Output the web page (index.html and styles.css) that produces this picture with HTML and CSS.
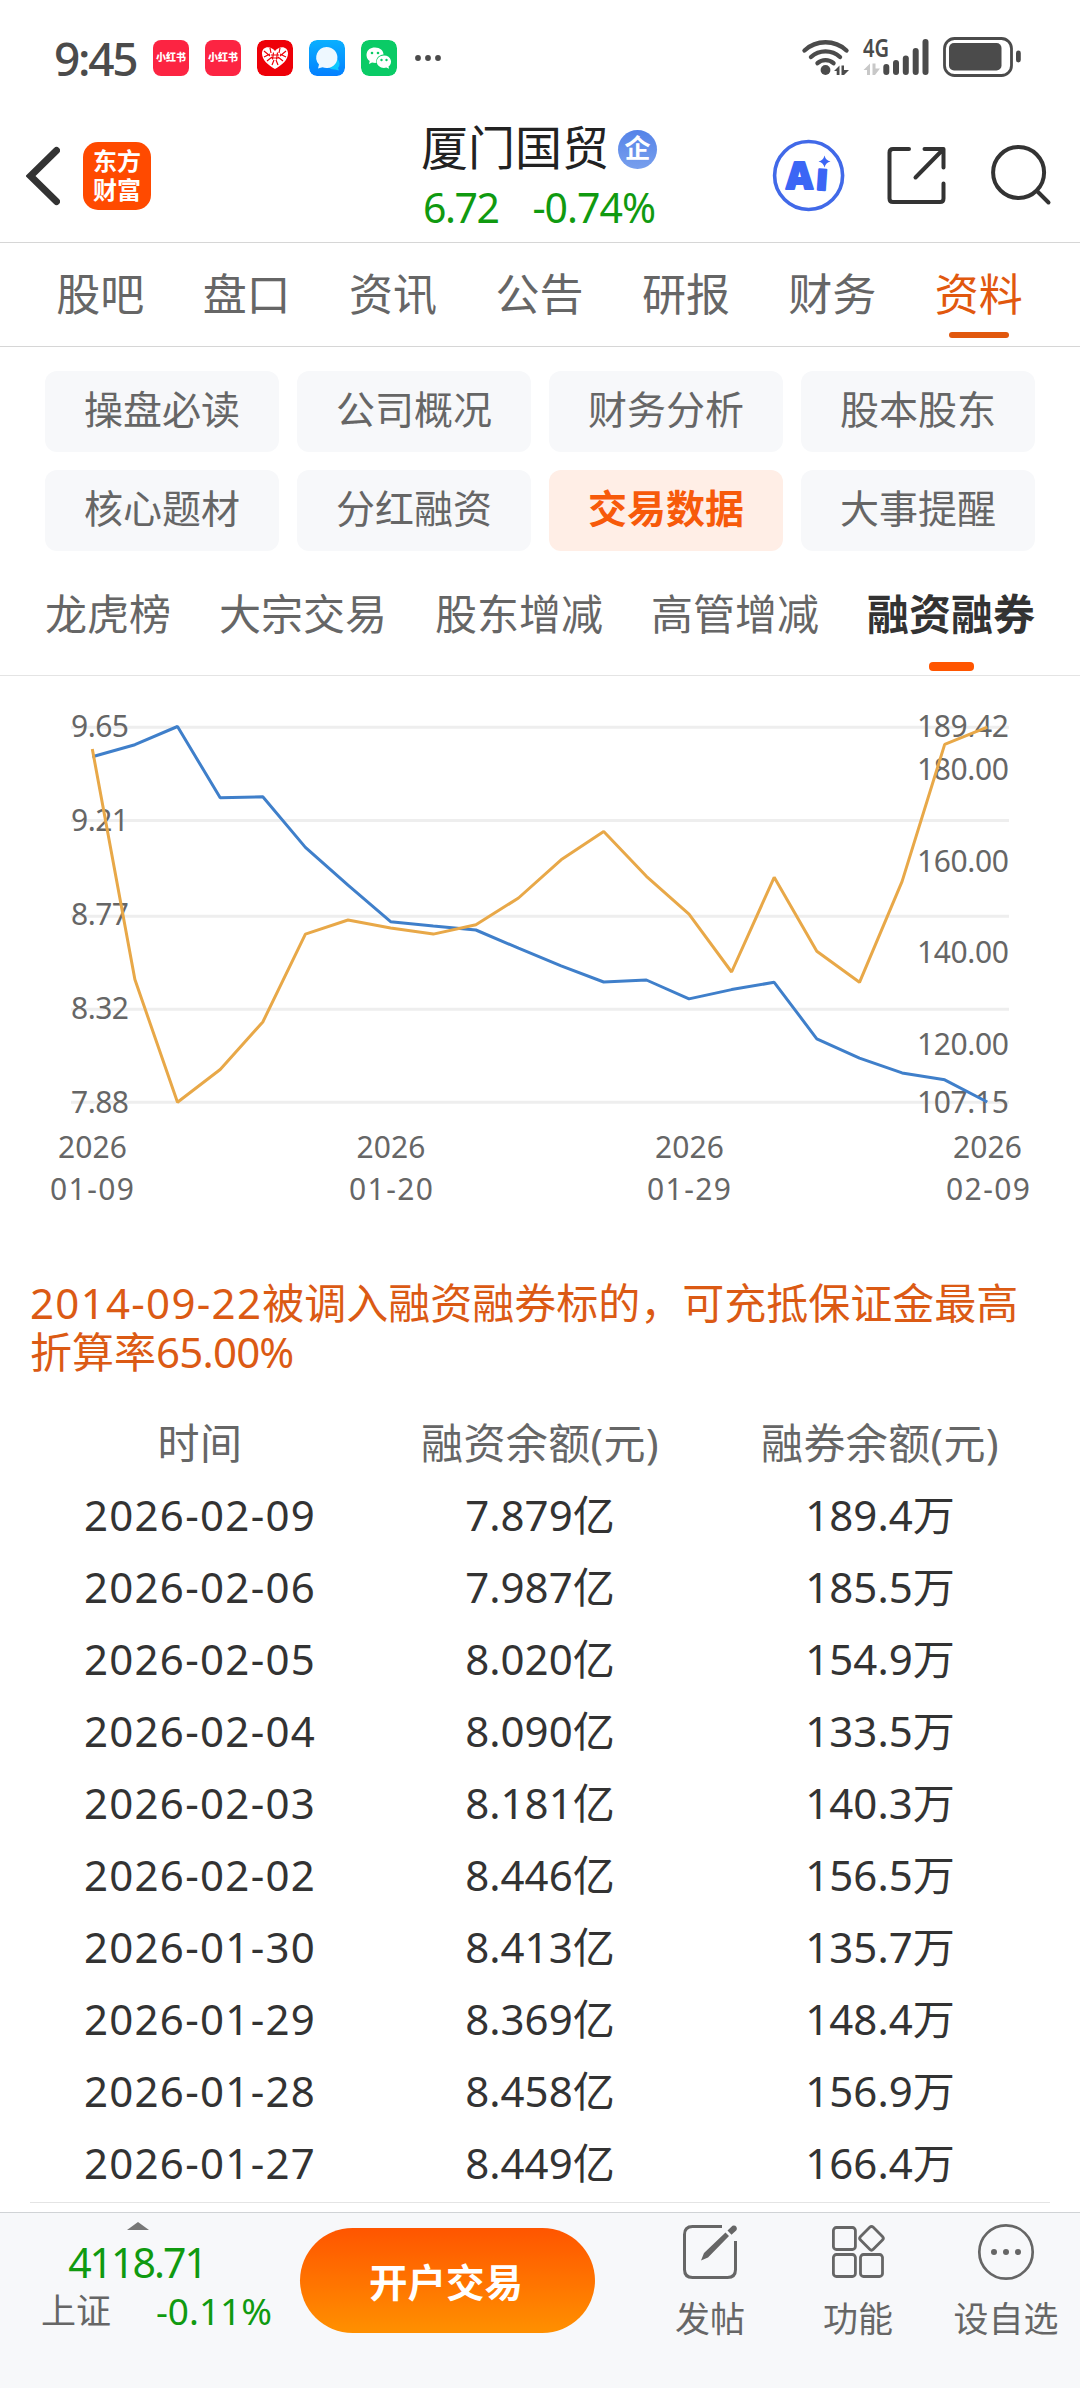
FILE: index.html
```html
<!DOCTYPE html>
<html lang="zh-CN">
<head>
    <meta charset="UTF-8">
    <meta name="viewport" content="width=device-width, initial-scale=1.0">
    <title>厦门国贸 - 融资融券</title>
    <link rel="stylesheet" href="styles.css">
</head>
<body>
    <div class="status-bar">
        <span class="clock">9:45</span>
        <div class="app-icons">
            <span class="app red">小红书</span>
            <span class="app red">小红书</span>
            <svg class="app" viewBox="0 0 36 36">
                <rect width="36" height="36" rx="8" fill="#ee0008"/>
                <path d="M18 29C11 25 5 20 5 13.500C5 6.500 13 5 18 11C23 5 31 6.500 31 13.500C31 20 25 25 18 29Z" fill="#fff"/>
                <path d="M7 11l6 5M7 17l6-3M10 21l5-4M13 8l1 5M29 11l-6 5M29 17l-6-3M26 21l-5-4M23 8l-1 5M15 25l2-5M21 25l-2-5M16.500 12.500l-1 7M20.500 12.500l-1 7M14 15h8M14 18h8" stroke="#ee0008" stroke-width="1.200"/>
            </svg>
            <svg class="app" viewBox="0 0 36 36">
                <defs>
                    <linearGradient id="msgBg" x1="0" y1="0" x2="0" y2="1">
                        <stop offset="0" stop-color="#0ab0ff"/>
                        <stop offset="1" stop-color="#0480ff"/>
                    </linearGradient>
                </defs>
                <rect width="36" height="36" rx="8" fill="url(#msgBg)"/>
                <path d="M28 19a6 6 0 0 1 1 9l1 2.500l-4-1a8 8 0 0 1-7-3z" fill="#0cc8ff"/>
                <path d="M17.500 7a11 10.500 0 1 1-4 20.300L9 28.500l1-4A11 10.500 0 0 1 17.500 7z" fill="#eef8ff"/>
            </svg>
            <svg class="app" viewBox="0 0 36 36">
                <rect width="36" height="36" rx="8" fill="#0acb66"/>
                <path d="M14 7.500c5 0 8.500 3 8.500 7c-5 .500-8 4-7 8.300c-1.500.200-3 0-4.500-.300L8 24l.700-3C3.500 17.500 4.500 7.500 14 7.500z" fill="#fff"/>
                <path d="M23 15.500c7.500 0 9 8 4.500 11l.500 2.300l-2.700-1.200c-5 1.200-9.500-1.600-9.500-5.800c0-3.500 3-6.300 7.200-6.300z" fill="#fff"/>
                <g fill="#0acb66">
                    <circle cx="11" cy="13" r="1.300"/><circle cx="17" cy="13" r="1.300"/>
                    <circle cx="20.500" cy="20" r="1.200"/><circle cx="25.500" cy="20" r="1.200"/>
                </g>
            </svg>
        </div>
        <svg class="dots" width="28" height="8" viewBox="0 0 28 8" fill="#4b4b4b">
            <circle cx="4" cy="4" r="2.900"/><circle cx="14" cy="4" r="2.900"/><circle cx="24" cy="4" r="2.900"/>
        </svg>
        <svg class="system-icons" width="224" height="64" viewBox="800 26 224 64" fill="#4b4b4b">
            <g fill="none" stroke="#4b4b4b" stroke-width="4.400" stroke-linecap="round">
                <path d="M804.500 50.500a31 31 0 0 1 42 0"/>
                <path d="M811 57a21.500 21.500 0 0 1 29 0"/>
                <path d="M817.500 63.200a12 12 0 0 1 16 0"/>
            </g>
            <circle cx="825.500" cy="70" r="4.900"/>
            <path d="M834 71l5.500-5.500v9.500h-2.800v-4zM841.500 65.500h2.500v4.500h5l-5 5h-2.500z"/>
            <text class="net" x="863" y="57" textLength="26" lengthAdjust="spacingAndGlyphs">4G</text>
            <path fill="#c8c8c8" d="M863.500 70l6.500-6.500v11.500h-3v-5zM872.500 63.500h3v5h4.500l-5 6.500h-2.500z"/>
            <rect x="883.300" y="64" width="6" height="11" rx="3"/>
            <rect x="893" y="60" width="6" height="15" rx="3"/>
            <rect x="902.800" y="55.500" width="6" height="19.500" rx="3"/>
            <rect x="912.700" y="48" width="6" height="27" rx="3"/>
            <rect x="922.500" y="39" width="6" height="36" rx="3"/>
            <rect x="944.500" y="38.500" width="67" height="37" rx="10" fill="none" stroke="#4b4b4b" stroke-width="2.800"/>
            <rect x="949" y="43" width="52.500" height="27.500" rx="5"/>
            <rect x="1016" y="50.500" width="4.800" height="12" rx="2.400"/>
        </svg>
    </div>

    <header class="header">
        <div class="header-left">
            <svg width="34" height="60" viewBox="0 0 34 60">
                <path d="M30.500 4.500L4.500 30L30.500 55.500" fill="none" stroke="#333" stroke-width="7" stroke-linecap="round"/>
            </svg>
            <div class="logo">东方<br>财富</div>
        </div>
        <div class="stock">
            <div class="stock-name">厦门国贸<span class="badge">企</span></div>
            <div class="stock-price"><span class="price">6.72</span><span class="change">-0.74%</span></div>
        </div>
        <svg class="header-icons" width="282" height="76" viewBox="770 138 282 76" fill="none" stroke="#333" stroke-width="4" stroke-linecap="round" stroke-linejoin="round">
            <circle cx="808.600" cy="175.500" r="34" stroke="#4169e8" stroke-width="3.600"/>
            <text class="ai" x="786" y="188.500">A</text>
            <text class="ai" x="816" y="190" transform="rotate(4 822 180)">ı</text>
            <path d="M824.500 155.500q1.200 5 6 6q-4.800 1-6 6q-1.200-5-6-6q4.800-1 6-6z" fill="#3b66f5" stroke="none"/>
            <path d="M909 149H893q-3.500 0-3.500 3.500V198.500q0 3.500 3.500 3.500H940q3.500 0 3.500-3.500V183.500M924.500 149H943.500V167.500M943 149.500L915.500 177.500"/>
            <circle cx="1018.600" cy="172.500" r="25.500"/>
            <path d="M1037 191L1048.500 202.500"/>
        </svg>
    </header>

    <nav class="main-tabs">
        <span>股吧</span>
        <span>盘口</span>
        <span>资讯</span>
        <span>公告</span>
        <span>研报</span>
        <span>财务</span>
        <span class="active">资料</span>
    </nav>

    <div class="chips">
        <span>操盘必读</span>
        <span>公司概况</span>
        <span>财务分析</span>
        <span>股本股东</span>
        <span>核心题材</span>
        <span>分红融资</span>
        <span class="active">交易数据</span>
        <span>大事提醒</span>
    </div>

    <nav class="sub-tabs">
        <span>龙虎榜</span>
        <span>大宗交易</span>
        <span>股东增减</span>
        <span>高管增减</span>
        <span class="active">融资融券</span>
    </nav>

    <svg class="chart" width="1080" height="602" viewBox="0 676 1080 602">
        <path class="grid" d="M71 727.300H1009M71 820.500H1009M71 916.300H1009M71 1009.300H1009M71 1102.300H1009"/>
        <g class="axis">
            <text x="71" y="737" textLength="58">9.65</text>
            <text x="71" y="831" textLength="58">9.21</text>
            <text x="71" y="925" textLength="58">8.77</text>
            <text x="71" y="1019" textLength="58">8.32</text>
            <text x="71" y="1113" textLength="58">7.88</text>
        </g>
        <g class="axis">
            <text x="917" y="737" textLength="92">189.42</text>
            <text x="917" y="780" textLength="92">180.00</text>
            <text x="917" y="872" textLength="92">160.00</text>
            <text x="917" y="963" textLength="92">140.00</text>
            <text x="917" y="1055" textLength="92">120.00</text>
            <text x="917" y="1113" textLength="92">107.15</text>
        </g>
        <g class="axis">
            <text x="58" y="1158" textLength="69">2026</text>
            <text x="50" y="1200" textLength="84">01-09</text>
            <text x="356.500" y="1158" textLength="69">2026</text>
            <text x="349" y="1200" textLength="84">01-20</text>
            <text x="655" y="1158" textLength="69">2026</text>
            <text x="647" y="1200" textLength="84">01-29</text>
            <text x="953" y="1158" textLength="69">2026</text>
            <text x="946" y="1200" textLength="84">02-09</text>
        </g>
        <polyline class="line margin" points="92.300,756.800 134.900,744.700 177.500,726.500 220.200,797.800 262.800,796.700 305.400,847.400 348,885.200 390.600,921.700 433.300,925.900 475.900,930 518.500,948.200 561.100,965.800 603.700,982 646.400,980 689,998.900 731.600,989.600 774.200,982.300 816.800,1038.800 859.500,1058.100 902.100,1072.900 944.700,1079.800 987.300,1102"/>
        <polyline class="line short" points="92.300,748.900 134.900,979.600 177.500,1102.200 220.200,1069.500 262.800,1022 305.400,934.100 348,920 390.600,928 433.300,934.100 475.900,924.800 518.500,898 561.100,859.800 603.700,831.500 646.400,876.300 689,914.200 731.600,972 774.200,877.300 816.800,951.300 859.500,982.300 902.100,881.400 944.700,744.400 987.300,727.200"/>
    </svg>

    <p class="note"><span class="date">2014-09-22</span>被调入融资融券标的，可充抵保证金最高折算率<span class="rate">65.00%</span></p>

    <div class="data-wrap">
        <table class="data">
            <thead>
                <tr><th>时间</th><th>融资余额(元)</th><th>融券余额(元)</th></tr>
            </thead>
            <tbody>
                <tr><td>2026-02-09</td><td>7.879亿</td><td>189.4万</td></tr>
                <tr><td>2026-02-06</td><td>7.987亿</td><td>185.5万</td></tr>
                <tr><td>2026-02-05</td><td>8.020亿</td><td>154.9万</td></tr>
                <tr><td>2026-02-04</td><td>8.090亿</td><td>133.5万</td></tr>
                <tr><td>2026-02-03</td><td>8.181亿</td><td>140.3万</td></tr>
                <tr><td>2026-02-02</td><td>8.446亿</td><td>156.5万</td></tr>
                <tr><td>2026-01-30</td><td>8.413亿</td><td>135.7万</td></tr>
                <tr><td>2026-01-29</td><td>8.369亿</td><td>148.4万</td></tr>
                <tr><td>2026-01-28</td><td>8.458亿</td><td>156.9万</td></tr>
                <tr><td>2026-01-27</td><td>8.449亿</td><td>166.4万</td></tr>
            </tbody>
        </table>
    </div>

    <footer class="bottom-bar">
        <div class="index">
            <div class="arrow-up"></div>
            <div class="index-value">4118.71</div>
            <div class="index-row"><span>上证</span><span class="index-change">-0.11%</span></div>
        </div>
        <button class="trade" type="button">开户交易</button>
        <div class="actions">
            <div class="action">
                <svg width="60" height="60" viewBox="0 0 60 60" fill="none" stroke="#666" stroke-width="3">
                    <path d="M42 4.500H12.500Q4.500 4.500 4.500 12.500V47.500Q4.500 55.500 12.500 55.500H47.500Q55.500 55.500 55.500 47.500V21L55.500 19"/>
                    <path d="M21 38.500L24 31L45.500 10.500L49 14L28 35.500ZM47.500 8.500L52.500 3.800Q55 3 56.500 5Q57.500 7 56.200 8.500L51.500 12.800Z" fill="#666" stroke="none"/>
                </svg>
                <span>发帖</span>
            </div>
            <div class="action">
                <svg width="60" height="60" viewBox="0 0 60 60" fill="none" stroke="#666" stroke-width="2.800">
                    <rect x="5.400" y="5.500" width="22" height="22" rx="3"/>
                    <rect x="5.400" y="32.500" width="22" height="22" rx="3"/>
                    <rect x="32.500" y="32.500" width="22" height="22" rx="3"/>
                    <rect x="34.500" y="7.300" width="18" height="18" rx="2.500" transform="rotate(45 43.500 16.300)"/>
                </svg>
                <span>功能</span>
            </div>
            <div class="action">
                <svg width="60" height="60" viewBox="0 0 60 60" fill="#666">
                    <circle cx="30" cy="30" r="26.700" fill="none" stroke="#666" stroke-width="2.700"/>
                    <circle cx="18" cy="30" r="3"/><circle cx="30" cy="30" r="3"/><circle cx="42" cy="30" r="3"/>
                </svg>
                <span>设自选</span>
            </div>
        </div>
    </footer>
</body>
</html>
```
FILE: styles.css
```css
* {
    box-sizing: border-box;
}
body {
    margin: 0;
    width: 1080px;
    height: 2388px;
    overflow: hidden;
    background: #fff;
    color: #666;
    font-family: "Noto Sans", "Noto Sans CJK SC", sans-serif;
    display: flex;
    flex-direction: column;
}
svg {
    display: block;
    flex: none;
}

/* status bar */
.status-bar {
    height: 110px;
    padding: 6px 56px 0 54px;
    display: flex;
    align-items: center;
    color: #4b4b4b;
}
.clock {
    width: 99px;
    font-size: 46px;
    font-weight: 500;
    letter-spacing: -2.3px;
}
.app-icons {
    display: flex;
    gap: 16px;
}
.app {
    width: 36px;
    height: 36px;
    border-radius: 8px;
}
.app.red {
    background: #fc2442;
    color: #fff;
    font-size: 10px;
    font-weight: 900;
    line-height: 35px;
    text-align: center;
}
.dots {
    margin-left: 17px;
}
.system-icons {
    margin-left: auto;
}
.net {
    font-size: 25px;
    font-weight: 600;
}

/* header */
.header {
    height: 133px;
    padding: 0 28px 0 26px;
    border-bottom: 1px solid #d6d6d6;
    display: grid;
    grid-template-columns: 1fr auto 1fr;
    align-items: center;
}
.header-left {
    display: flex;
    align-items: center;
    gap: 23px;
}
.logo {
    width: 68px;
    height: 68px;
    padding-top: 4px;
    border-radius: 15px;
    background: #ff4a00;
    color: #fff;
    font-size: 24px;
    font-weight: 700;
    line-height: 29px;
    text-align: center;
}
.stock-name {
    display: flex;
    align-items: center;
    height: 58px;
    color: #222;
    font-size: 47px;
    line-height: 56px;
}
.badge {
    width: 39px;
    height: 39px;
    margin: 5px 0 0 9px;
    border-radius: 50%;
    background: linear-gradient(#5583e8, #789fed);
    color: #fff;
    font-size: 26px;
    font-weight: 700;
    line-height: 37px;
    text-align: center;
}
.stock-price {
    display: flex;
    justify-content: space-between;
    padding: 3px 2px 0;
    color: #109a10;
    font-size: 41px;
    line-height: 56px;
}
.price {
    letter-spacing: -1.5px;
}
.change {
    letter-spacing: -1px;
}
.header-icons {
    justify-self: end;
}
.ai {
    fill: #3b66f5;
    stroke: #3b66f5;
    stroke-width: 2px;
    font-size: 37px;
    font-weight: 900;
}

/* tabs */
.main-tabs {
    height: 104px;
    padding: 0 28px 0 27px;
    border-bottom: 1px solid #d6d6d6;
    display: flex;
}
.main-tabs span {
    position: relative;
    flex: 1;
    font-size: 44px;
    line-height: 103px;
    text-align: center;
}
.main-tabs .active {
    color: #e1580e;
}
.main-tabs .active::after {
    content: "";
    position: absolute;
    left: 50%;
    bottom: 8px;
    width: 60px;
    height: 6px;
    margin-left: -30px;
    border-radius: 3px;
    background: #e1580e;
}
.chips {
    padding: 24px 45px 0;
    display: grid;
    grid-template-columns: repeat(4, 1fr);
    gap: 18px;
}
.chips span {
    height: 81px;
    border-radius: 12px;
    background: #f7f8fa;
    font-size: 39px;
    line-height: 75px;
    text-align: center;
}
.chips .active {
    background: #ffeee6;
    color: #f75a0a;
    font-weight: 700;
}
.sub-tabs {
    height: 125px;
    padding: 0 45px;
    border-bottom: 1px solid #e4e4e4;
    display: flex;
    justify-content: space-between;
}
.sub-tabs span {
    position: relative;
    font-size: 42px;
    line-height: 126px;
}
.sub-tabs .active {
    color: #333;
    font-weight: 700;
}
.sub-tabs .active::after {
    content: "";
    position: absolute;
    left: 50%;
    bottom: 4px;
    width: 45px;
    height: 9px;
    margin-left: -22px;
    border-radius: 4px;
    background: #ff5500;
}

/* chart */
.grid {
    stroke: #eee;
    stroke-width: 3px;
}
.axis {
    fill: #666;
    font-size: 30px;
}
.line {
    fill: none;
    stroke-width: 3px;
    stroke-linejoin: bevel;
}
.margin {
    stroke: #3f7fca;
}
.short {
    stroke: #e8a848;
}

/* table */
.note {
    height: 128px;
    margin: 0;
    padding: 0 30px;
    color: #db5a14;
    font-size: 42px;
    line-height: 49px;
}
.date {
    letter-spacing: 1.3px;
}
.rate {
    letter-spacing: -0.8px;
}
.data-wrap {
    margin: 0 30px;
    padding-bottom: 4px;
    border-bottom: 1px solid #e4e4e4;
}
.data {
    width: 100%;
    border-collapse: separate;
    border-spacing: 0;
    table-layout: fixed;
    font-size: 42px;
    text-align: center;
}
.data th,
.data td {
    height: 72px;
    padding: 0;
    line-height: 71px;
}
.data th {
    font-weight: 400;
    letter-spacing: 0.4px;
}
.data td {
    color: #333;
}
.data td:first-child {
    letter-spacing: 1.3px;
}

/* bottom bar */
.bottom-bar {
    height: 176px;
    margin-top: auto;
    border-top: 1px solid #d0d3d6;
    background: #f7f8fa;
    display: flex;
}
.index {
    width: 300px;
    padding-top: 9px;
}
.arrow-up {
    margin-left: 127px;
    width: 22px;
    height: 8px;
    background: #777;
    clip-path: polygon(50% 0, 100% 100%, 0 100%);
}
.index-value {
    width: 274px;
    padding-top: 7px;
    color: #109a10;
    font-size: 41px;
    line-height: 50px;
    letter-spacing: -2px;
    text-align: center;
}
.index-row {
    display: flex;
    justify-content: space-between;
    padding: 1px 28px 0 41px;
    font-size: 35px;
    line-height: 46px;
}
.index-change {
    color: #109a10;
    font-size: 37px;
}
.trade {
    width: 295px;
    height: 105px;
    margin-top: 15px;
    padding: 0 3px 2px 0;
    border: none;
    border-radius: 53px;
    background: linear-gradient(#ff5500, #ff9000);
    color: #fff;
    font-family: inherit;
    font-size: 38.5px;
    font-weight: 700;
}
.actions {
    flex: 1;
    margin-left: 41px;
    display: flex;
}
.action {
    flex: 1;
    padding-top: 9px;
    display: flex;
    flex-direction: column;
    align-items: center;
    font-size: 35px;
    line-height: 74px;
    white-space: nowrap;
}
```
